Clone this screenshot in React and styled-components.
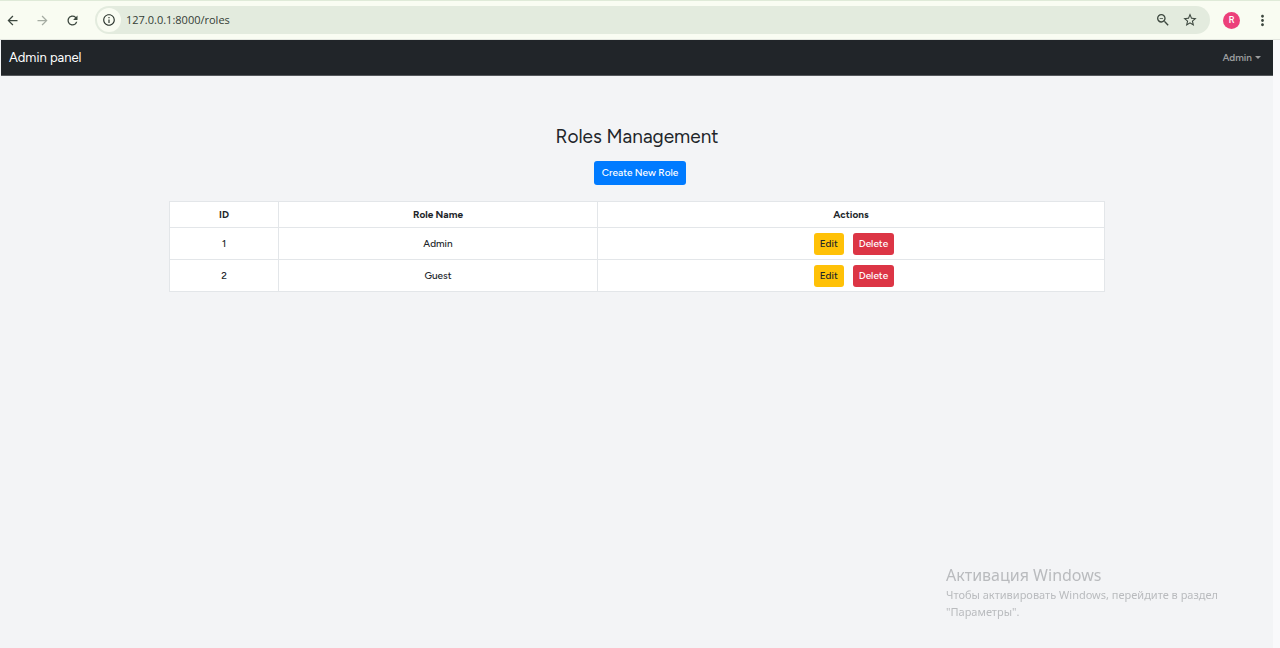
import React from "react";
import styled, { createGlobalStyle } from "styled-components";
import {
  MdArrowBack,
  MdArrowForward,
  MdRefresh,
  MdInfoOutline,
  MdOutlineZoomOut,
  MdStarBorder,
  MdMoreVert,
} from "react-icons/md";

const GlobalStyle = createGlobalStyle`
  *, *::before, *::after { box-sizing: border-box; }
  body {
    margin: 0;
    background: #f3f4f6;
    color: #212529;
    font-family: Figtree, Lato, "Liberation Sans", sans-serif;
    font-size: 10px;
    font-weight: 500;
    line-height: 16px;
  }
  button, input { font: inherit; }
`;

const Window = styled.div`
  display: flex;
  flex-direction: column;
  min-height: 100vh;
`;

const BrowserBar = styled.header`
  display: flex;
  align-items: center;
  height: 40px;
  padding: 0 8px 0 2px;
  background: #f9fcf2;
  border-top: 1px solid #dfead8;
  border-bottom: 1px solid #e3e6df;
`;

const IconButton = styled.button`
  display: grid;
  place-items: center;
  flex: none;
  width: 20px;
  height: 24px;
  margin: 0 ${(p) => p.$gap || 0}px 0 0;
  padding: 0;
  border: 0;
  background: none;
  color: ${(p) => (p.$dim ? "#a5aca2" : "#3d483f")};
  font-size: ${(p) => p.$size || 15}px;
`;

const AddressBar = styled.div`
  display: flex;
  align-items: center;
  flex: 1;
  height: 28px;
  margin-left: 5px;
  padding: 0 10px 0 2px;
  border-radius: 14px;
  background: #e3ebde;
`;

const SiteInfo = styled.button`
  display: grid;
  place-items: center;
  flex: none;
  width: 24px;
  height: 24px;
  padding: 0;
  border: 0;
  border-radius: 50%;
  background: #f9fcf2;
  color: #2c352e;
  font-size: 14px;
`;

const AddressInput = styled.input`
  flex: 1;
  min-width: 0;
  padding: 0 0 0 5px;
  border: 0;
  outline: 0;
  background: none;
  color: #343d35;
  font-family: "Open Sans", "Noto Sans", sans-serif;
  font-size: 11px;
  font-weight: 400;
`;

const Avatar = styled.button`
  width: 17px;
  height: 17px;
  margin: 0 12px 0 13px;
  padding: 0;
  border: 0;
  border-radius: 50%;
  background: #ec407a;
  color: #fff;
  font-family: Roboto, sans-serif;
  font-size: 9px;
  line-height: 17px;
`;

const Page = styled.div`
  display: flex;
  flex: 1;
  flex-direction: column;
  padding-left: 1px;
  border-right: 7px solid #f9f9fb;
`;

const Navbar = styled.nav`
  display: flex;
  align-items: center;
  justify-content: space-between;
  height: 36px;
  padding: 0 12px 0 8px;
  border-bottom: 1px solid #55585c;
  background: #212529;
`;

const Brand = styled.a`
  color: #fff;
  font-size: 13px;
  font-weight: 400;
  text-decoration: none;
`;

const UserMenu = styled.button`
  display: flex;
  align-items: center;
  gap: 3px;
  padding: 0;
  border: 0;
  background: none;
  color: #9b9d9e;
  font-weight: 600;

  &::after {
    content: "";
    border: 3px solid transparent;
    border-top-color: currentColor;
    border-bottom: 0;
  }
`;

const Main = styled.main`
  display: flex;
  flex: 1;
  flex-direction: column;
  align-items: center;
  width: 74%;
  min-width: 480px;
  margin: 0 auto;
  padding: 48px 3px 24px;
`;

const Title = styled.h1`
  margin: 0 0 11px;
  font-size: 19px;
  font-weight: 400;
  line-height: 26px;
`;

const Action = styled.button`
  height: 22px;
  padding: 0 6px;
  border: 0;
  border-radius: 3px;
  background: ${(p) => p.$background};
  color: ${(p) => p.$color || "#fff"};
`;

const CreateAction = styled(Action)`
  height: 24px;
  margin-left: 6px;
  padding: 0 8px;
`;

const RolesTable = styled.table`
  width: 100%;
  margin-top: 16px;
  border-collapse: collapse;
  table-layout: fixed;
  background: #fff;
  text-align: center;
`;

const Column = styled.col`
  width: ${(p) => p.$share};
`;

const Cell = styled.td`
  height: 32px;
  padding: 0;
  border: 1px solid #e3e6e9;
`;

const HeadCell = styled(Cell)`
  height: 26px;
  font-weight: 700;
`;

const Actions = styled.div`
  display: flex;
  justify-content: center;
  gap: 9px;
  padding-left: 6px;
`;

const ActivationNotice = styled.aside`
  position: fixed;
  right: 32px;
  bottom: 28px;
  width: 302px;
  color: #b9bbbe;
  font-family: "Noto Sans", "Open Sans", sans-serif;
  font-size: 11px;
  font-weight: 400;
  line-height: 17px;
`;

const NoticeTitle = styled.div`
  font-size: 16px;
  line-height: 22px;
`;

const roles = [
  { id: 1, name: "Admin" },
  { id: 2, name: "Guest" },
];

export default function App() {
  return (
    <Window>
      <GlobalStyle />
      <BrowserBar>
        <IconButton aria-label="Back" $gap={10}><MdArrowBack /></IconButton>
        <IconButton aria-label="Forward" $gap={10} $dim><MdArrowForward /></IconButton>
        <IconButton aria-label="Reload" $gap={8}><MdRefresh /></IconButton>
        <AddressBar>
          <SiteInfo aria-label="Site information"><MdInfoOutline /></SiteInfo>
          <AddressInput aria-label="Address" defaultValue="127.0.0.1:8000/roles" />
          <IconButton aria-label="Zoom" $gap={7} $size={16}><MdOutlineZoomOut /></IconButton>
          <IconButton aria-label="Bookmark" $size={16}><MdStarBorder /></IconButton>
        </AddressBar>
        <Avatar aria-label="Profile">R</Avatar>
        <IconButton aria-label="Browser menu" $size={17}><MdMoreVert /></IconButton>
      </BrowserBar>
      <Page>
        <Navbar>
          <Brand href="#">Admin panel</Brand>
          <UserMenu>Admin</UserMenu>
        </Navbar>
        <Main>
          <Title>Roles Management</Title>
          <CreateAction $background="#007bff">Create New Role</CreateAction>
          <RolesTable>
            <colgroup>
              <Column $share="11.6%" />
              <Column $share="34.2%" />
              <Column $share="54.2%" />
            </colgroup>
            <thead>
              <tr>
                <HeadCell as="th" scope="col">ID</HeadCell>
                <HeadCell as="th" scope="col">Role Name</HeadCell>
                <HeadCell as="th" scope="col">Actions</HeadCell>
              </tr>
            </thead>
            <tbody>
              {roles.map((role) => (
                <tr key={role.id}>
                  <Cell>{role.id}</Cell>
                  <Cell>{role.name}</Cell>
                  <Cell>
                    <Actions>
                      <Action $background="#ffc107" $color="#212529">Edit</Action>
                      <Action $background="#dc3545">Delete</Action>
                    </Actions>
                  </Cell>
                </tr>
              ))}
            </tbody>
          </RolesTable>
        </Main>
      </Page>
      <ActivationNotice>
        <NoticeTitle>Активация Windows</NoticeTitle>
        Чтобы активировать Windows, перейдите в раздел "Параметры".
      </ActivationNotice>
    </Window>
  );
}
